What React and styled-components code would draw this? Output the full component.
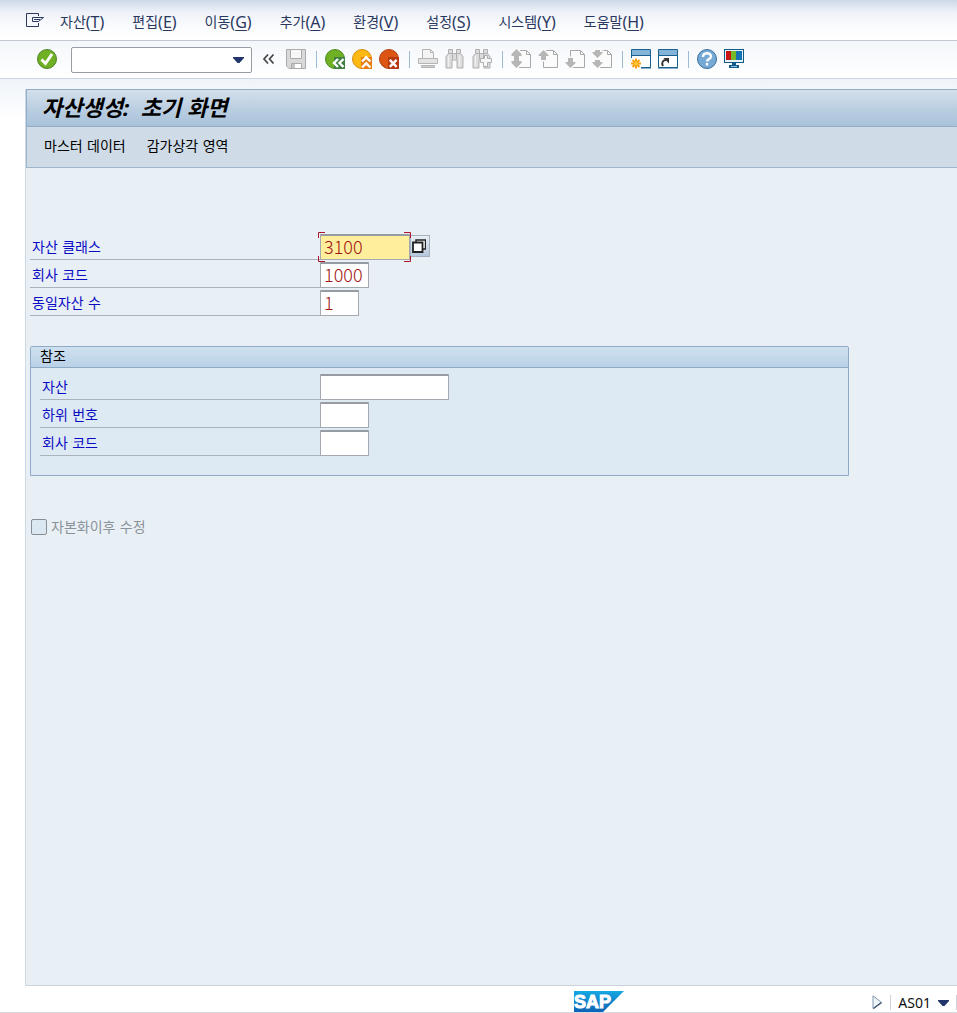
import { useState } from "react";
import styled, { createGlobalStyle } from "styled-components";

const menus = [
  ["자산", "T"],
  ["편집", "E"],
  ["이동", "G"],
  ["추가", "A"],
  ["환경", "V"],
  ["설정", "S"],
  ["시스템", "Y"],
  ["도움말", "H"],
];

export default function App() {
  const [command, setCommand] = useState("");
  const [assetClass, setAssetClass] = useState("3100");
  const [company, setCompany] = useState("1000");
  const [count, setCount] = useState("1");

  return (
    <Page>
      <GlobalStyle />
      <MenuBar aria-label="Menu">
        <MenuIconButton aria-label="Session menu">
          <SessionIcon />
        </MenuIconButton>
        {menus.map(([label, key]) => (
          <MenuItem key={key}>
            {label}
            <Shortcut>
              (<u>{key}</u>)
            </Shortcut>
          </MenuItem>
        ))}
      </MenuBar>

      <Toolbar>
        <IconButton aria-label="Enter">
          <EnterIcon />
        </IconButton>
        <CommandBox>
          <CommandInput
            aria-label="Command"
            value={command}
            onChange={(e) => setCommand(e.target.value)}
          />
          <CommandToggle aria-label="Command history">
            <DownArrow />
          </CommandToggle>
        </CommandBox>
        <IconButton aria-label="Collapse">
          <CollapseIcon />
        </IconButton>
        <IconButton aria-label="Save" disabled>
          <SaveIcon />
        </IconButton>
        <Separator />
        <IconButton aria-label="Back">
          <RoundIcon fill="#6fb024" edge="#4b8a1d" corner="#3f8040">
            <path d="M13 10l-4 4 4 4M18.5 10l-4 4 4 4" />
          </RoundIcon>
        </IconButton>
        <IconButton aria-label="Exit">
          <RoundIcon fill="#fdb913" edge="#d98c10" corner="#e87b12">
            <path d="M10 12.5l4.2-4.2 4.2 4.2M10 18.5l4.2-4.2 4.2 4.2" />
          </RoundIcon>
        </IconButton>
        <IconButton aria-label="Cancel">
          <RoundIcon fill="#dc5515" edge="#b3400f" corner="#b53a12">
            <path d="M10.8 10.8l6.8 7M17.6 10.8l-6.8 7" />
          </RoundIcon>
        </IconButton>
        <Separator />
        <IconButton aria-label="Print" disabled>
          <PrintIcon />
        </IconButton>
        <IconButton aria-label="Find" disabled>
          <FindIcon />
        </IconButton>
        <IconButton aria-label="Find next" disabled>
          <FindIcon next />
        </IconButton>
        <Separator />
        <IconButton aria-label="First page" disabled>
          <PageIcon arrows={["M5.5 0l5 5v2H8v3H3V7H.5V5z", "M3 10h5v2h2.5v2l-5 5-5-5v-2H3z"]} />
        </IconButton>
        <IconButton aria-label="Previous page" disabled>
          <PageIcon arrows={["M5.5 1l5 5v1H8v4H3V7H.5V6z"]} />
        </IconButton>
        <IconButton aria-label="Next page" disabled>
          <PageIcon arrows={["M3 9h5v4h2.5v1l-5 5-5-5v-1H3z"]} />
        </IconButton>
        <IconButton aria-label="Last page" disabled>
          <PageIcon arrows={["M3 1h5v2h2.5v1l-5 5-5-5V3H3z", "M3 11h5v2h2.5v1l-5 5-5-5v-1H3z"]} />
        </IconButton>
        <Separator />
        <IconButton aria-label="New session">
          <WindowIcon>
            <path d="M0 9h10v11H0z" fill="#fff" />
            <path
              d="M5 9.5v10M0 14.5h10M1.5 11l7 7M8.5 11l-7 7"
              stroke="#f5a010"
              strokeWidth="2"
            />
            <circle cx="5" cy="14.5" r="2" fill="#ffc629" />
          </WindowIcon>
        </IconButton>
        <IconButton aria-label="Create shortcut">
          <WindowIcon>
            <path d="M5 17c-2-3 0-6 3-6" stroke="#333" strokeWidth="2" fill="none" />
            <path d="M5.5 9H11v5.5z" fill="#333" />
          </WindowIcon>
        </IconButton>
        <Separator />
        <IconButton aria-label="Help">
          <HelpIcon />
        </IconButton>
        <IconButton aria-label="Customize layout">
          <MonitorIcon />
        </IconButton>
      </Toolbar>

      <Screen>
        <TitleBar>
          <Title>{"자산생성:  초기 화면"}</Title>
        </TitleBar>
        <AppToolbar>
          <AppButton>마스터 데이터</AppButton>
          <AppButton>감가상각 영역</AppButton>
        </AppToolbar>

        <Content>
          <Row>
            <Label htmlFor="asset-class">자산 클래스</Label>
            <FocusFrame>
              <Field
                id="asset-class"
                $width={90}
                $active
                value={assetClass}
                onChange={(e) => setAssetClass(e.target.value)}
              />
              <Corners />
            </FocusFrame>
            <SearchHelp aria-label="자산 클래스 검색">
              <CopyIcon />
            </SearchHelp>
          </Row>
          <Row>
            <Label htmlFor="company">회사 코드</Label>
            <Field
              id="company"
              $width={49}
              value={company}
              onChange={(e) => setCompany(e.target.value)}
            />
          </Row>
          <Row>
            <Label htmlFor="count">동일자산 수</Label>
            <Field
              id="count"
              $width={39}
              value={count}
              onChange={(e) => setCount(e.target.value)}
            />
          </Row>

          <Group aria-labelledby="ref-title">
            <GroupTitle id="ref-title">참조</GroupTitle>
            <GroupBody>
              <Row>
                <Label htmlFor="ref-asset" $inner>자산</Label>
                <Field id="ref-asset" $width={129} />
              </Row>
              <Row>
                <Label htmlFor="ref-sub" $inner>하위 번호</Label>
                <Field id="ref-sub" $width={49} />
              </Row>
              <Row>
                <Label htmlFor="ref-company" $inner>회사 코드</Label>
                <Field id="ref-company" $width={49} />
              </Row>
            </GroupBody>
          </Group>

          <CheckLabel>
            <Checkbox type="checkbox" disabled />
            자본화이후 수정
          </CheckLabel>
        </Content>
      </Screen>

      <StatusBar>
        <SapLogo />
        <StatusRight>
          <StatusButton aria-label="Expand status">
            <ExpandIcon />
          </StatusButton>
          <StatusLine />
          <StatusButton>
            AS01
            <DownArrow />
          </StatusButton>
          <StatusLine />
        </StatusRight>
      </StatusBar>
    </Page>
  );
}

/* ---------- icons ---------- */

function SessionIcon() {
  return (
    <svg width="19" height="15" viewBox="0 0 19 15" fill="none" stroke="#2c3a5e">
      <path d="M12.5 3V.5H.5v13h12V10" />
      <path d="M6.5 4.5h11l-5 4h-6v-4M8 6.5h6" />
    </svg>
  );
}

function DownArrow() {
  return (
    <svg width="11" height="6" viewBox="0 0 11 6">
      <path d="M0 0h11v1L6.5 6h-2L0 1z" fill="#22366b" />
    </svg>
  );
}

function EnterIcon() {
  return (
    <svg width="20" height="20" viewBox="0 0 20 20">
      <circle cx="10" cy="10" r="9.5" fill="#6fb024" stroke="#508528" />
      <path d="M4.5 10.5l4 4 6.5-9.5" fill="none" stroke="#fff" strokeWidth="3" />
    </svg>
  );
}

function CollapseIcon() {
  return (
    <svg width="20" height="20" viewBox="0 0 20 20" fill="none" stroke="#444" strokeWidth="1.7">
      <path d="M9 5.5L5 10l4 4.5M14.5 5.5l-4 4.5 4 4.5" />
    </svg>
  );
}

function SaveIcon() {
  return (
    <svg width="20" height="20" viewBox="0 0 20 20" fill="#d9d9d9" stroke="#aaa">
      <path d="M.5.5h19v19H3L.5 17z" />
      <path d="M4.5.5h11v9h-11z" fill="#f7f7f7" />
      <path d="M5.5 14.5h10v5h-10z" fill="#fff" />
      <path d="M6 15h3v4H6z" fill="#c4c4c4" stroke="none" />
    </svg>
  );
}

function RoundIcon({ fill, edge, corner, children }) {
  return (
    <svg width="20" height="20" viewBox="0 0 20 20">
      <circle cx="10" cy="10" r="9.5" fill={fill} stroke={edge} />
      <path d="M9 8h11v12H9z" fill={corner} />
      <g fill="none" stroke="#fff" strokeWidth="2.4">
        {children}
      </g>
    </svg>
  );
}

function PrintIcon() {
  return (
    <svg width="20" height="20" viewBox="0 0 20 20" fill="#f4f4f4" stroke="#b5b5b5">
      <path d="M4.5 9V.5h8l3 3V9" />
      <path d="M12.5.5v3h3" fill="none" />
      <path d="M.5 9.5h19v5H.5z" fill="#e4e4e4" />
      <path d="M3.5 16.5h13v2h-13z" fill="#ccc" />
    </svg>
  );
}

function FindIcon({ next }) {
  return (
    <svg width="20" height="20" viewBox="0 0 20 20" fill="#dcdcdc" stroke="#b0b0b0">
      <path d="M3.5.5h4v4h4v-4h4v4l2.5 3V19h-6v-8H7v8H1V7.5l2.5-3z" />
      <path d="M3.5 4.5h4v6M15.5 4.5h-4v6" fill="none" />
      <path d="M3.5 6.500v11M14.5 6.500v11" stroke="#f2f2f2" />
      {next && <path d="M12.5 6.5h3v3h4v4h-4v4h-4v-4h-3v-4h4z" fill="#f6f6f6" />}
    </svg>
  );
}

function PageIcon({ arrows }) {
  return (
    <svg width="20" height="20" viewBox="0 0 20 20" stroke="#a8a8a8">
      <path d="M5.5 1.5h10l4 4v13h-14z" fill="#fbfbfb" />
      <path d="M15.5 1.5v4h4" fill="none" />
      {arrows.map((d) => (
        <path key={"halo" + d} d={d} fill="#fbfbfb" stroke="#fbfbfb" strokeWidth="3" />
      ))}
      {arrows.map((d) => (
        <path key={d} d={d} fill="#b6b6b6" stroke="none" />
      ))}
    </svg>
  );
}

function WindowIcon({ children }) {
  return (
    <svg width="20" height="20" viewBox="0 0 20 20">
      <path d="M.5.5h19v18H.5z" fill="#fff" stroke="#17608f" />
      <path d="M1 1h18v5H1z" fill="#83b3d9" />
      <path d="M0 6.5h20M0 19h20" stroke="#17608f" />
      {children}
    </svg>
  );
}

function HelpIcon() {
  return (
    <svg width="20" height="20" viewBox="0 0 20 20">
      <circle cx="10" cy="10" r="9.5" fill="#75a9d6" stroke="#3c6f9e" />
      <path
        d="M6 8c0-5 8-5 8-.5 0 2.7-4 2.5-4 5M10 14v2.5"
        fill="none"
        stroke="#fff"
        strokeWidth="2.4"
      />
    </svg>
  );
}

function MonitorIcon() {
  return (
    <svg width="20" height="20" viewBox="0 0 20 20">
      <path d="M0 0h20v14H0z" fill="#0f5b8a" />
      <path d="M1 1h18v12H1z" fill="#e8f3f8" />
      <path d="M2 2h5v9H2z" fill="#c91414" />
      <path d="M7 2h5v9H7z" fill="#76b82a" />
      <path d="M12 2h6v9h-6z" fill="#1472b5" />
      <path d="M8 14h4v2h3v3H5v-3h3z" fill="#0f5b8a" />
      <path d="M7 17h6v1H7z" fill="#8fc4dd" />
    </svg>
  );
}

function CopyIcon() {
  return (
    <svg width="14" height="14" viewBox="0 0 14 14" fill="#fff" stroke="#222">
      <path d="M4 1h9.5v9H4z" strokeWidth="1.4" />
      <path d="M1 3.5h9.5V13H1z" strokeWidth="1.8" />
    </svg>
  );
}

function Corners() {
  return (
    <CornerSvg fill="none" stroke="#b3122b" viewBox="0 0 93 30">
      <path d="M.5 6V.5H7M86 .5h6.5V6M.5 24v5.5H7M86 29.5h6.5V24" />
    </CornerSvg>
  );
}

function ExpandIcon() {
  return (
    <svg width="11" height="15" viewBox="0 0 11 15">
      <path d="M1 .8v12.7l8.5-6z" fill="#eef3f8" stroke="#8197ae" />
      <path d="M1.5 13.5l8-6" stroke="#41576f" strokeWidth="1.5" />
    </svg>
  );
}

function SapLogo() {
  return (
    <svg width="50" height="21" viewBox="0 0 50 21" role="img" aria-label="SAP">
      <defs>
        <linearGradient id="sap" x1="0" y1="0" x2="0" y2="1">
          <stop offset="0" stopColor="#16a9e3" />
          <stop offset="1" stopColor="#0d62b5" />
        </linearGradient>
      </defs>
      <path d="M0 0h50L29 21H0z" fill="url(#sap)" />
      <text
        x="0"
        y="17"
        fill="#fff"
        stroke="#fff"
        strokeWidth="1"
        fontFamily="Liberation Sans, sans-serif"
        fontWeight="700"
        fontSize="18"
      >
        SAP
      </text>
    </svg>
  );
}

/* ---------- styles ---------- */

const GlobalStyle = createGlobalStyle`
  * {
    box-sizing: border-box;
  }

  body {
    margin: 0;
    background: #fff;
  }

  body, button, input {
    font-family: "DejaVu Sans", "Noto Sans CJK KR", sans-serif;
    font-size: 14px;
    line-height: 20px;
  }

  button {
    padding: 0;
    border: 0;
    background: none;
    color: inherit;
    cursor: pointer;
  }

  svg {
    display: block;
  }
`;

const Page = styled.div`
  display: flex;
  flex-direction: column;
  min-height: 100vh;
  background: linear-gradient(#f0f4fa 80px, #fff 120px);
`;

const MenuBar = styled.nav`
  display: flex;
  align-items: center;
  gap: 28px;
  height: 41px;
  padding: 4px 26px 0;
  border-bottom: 1px solid #c3c7cf;
  background: linear-gradient(#cdd8e8, #eef2f8 12px, #fbfcfe 28px, #fff);
  color: #2a3860;
`;

const MenuIconButton = styled.button`
  margin-right: -13px;
  padding-bottom: 4px;
`;

const MenuItem = styled.button`
  display: flex;
  align-items: center;
  white-space: nowrap;
`;

const Shortcut = styled.span`
  font-family: "Noto Sans", sans-serif;
  font-size: 16px;

  u {
    text-underline-offset: 2px;
  }
`;

const Toolbar = styled.div`
  display: flex;
  align-items: center;
  gap: 7px;
  height: 38px;
  padding: 0 37px 1px;
  border-bottom: 1px solid #cbd5e2;
  background: linear-gradient(#f4f7fb, #fff);
`;

const IconButton = styled.button`
  flex: none;
  width: 20px;
  height: 20px;

  &:disabled {
    cursor: default;
  }
`;

const Separator = styled.span`
  width: 1px;
  height: 17px;
  margin: 0 1px 0 3px;
  background: #9dbbd6;
`;

const CommandBox = styled.div`
  display: flex;
  width: 181px;
  height: 26px;
  margin: 2px 0 0 7px;
  border: 1px solid #999da3;
  border-radius: 2px;
  background: #fff;
`;

const CommandInput = styled.input`
  flex: 1;
  min-width: 0;
  padding: 0 4px;
  border: 0;
  outline: 0;
  background: none;
`;

const CommandToggle = styled.button`
  display: flex;
  align-items: center;
  justify-content: center;
  width: 25px;
`;

const Screen = styled.main`
  display: flex;
  flex: 1;
  flex-direction: column;
  margin: 10px 0 0 25px;
  border-left: 1px solid #ccd8e2;
  border-bottom: 1px solid #c9d3db;
  background: #e8f0f6;
`;

const TitleBar = styled.header`
  display: flex;
  align-items: center;
  height: 38px;
  padding: 0 15px 2px;
  border: 1px solid #95adc4;
  border-right: 0;
  background: linear-gradient(#d3e0ec, #bccfe1 50%, #a8c2db);
`;

const Title = styled.h1`
  margin: 0;
  font-family: "Noto Sans", "Noto Sans CJK KR", sans-serif;
  font-size: 22px;
  font-style: italic;
  font-weight: 700;
  line-height: 28px;
  white-space: pre;
`;

const AppToolbar = styled.div`
  display: flex;
  align-items: center;
  gap: 21px;
  height: 41px;
  padding: 0 17px 2px;
  border: 1px solid #9fb5c9;
  border-width: 0 0 1px 1px;
  background: #cfdce7;
`;

const AppButton = styled.button`
  white-space: nowrap;
`;

const Content = styled.div`
  padding: 64px 20px 40px 4px;
`;

const Row = styled.div`
  display: flex;
  align-items: center;
  height: 28px;
`;

const Label = styled.label`
  width: ${(props) => (props.$inner ? "280px" : "290px")};
  height: 28px;
  padding: 5px 2px 0;
  border-bottom: 1px solid #a9b3bb;
  color: #0a0ac4;
`;

const Field = styled.input`
  width: ${(props) => props.$width}px;
  height: 26px;
  margin-top: 2px;
  padding: 0 3px 4px;
  border: 1px solid #a3a9ae;
  border-top: 2px solid #969ca2;
  border-radius: 1px;
  outline: 0;
  background: ${(props) => (props.$active ? "#ffee9c" : "#fff")};
  color: #a01212;
  font-family: "Noto Sans CJK KR", sans-serif;
  font-size: 18px;
  font-weight: 300;
`;

const FocusFrame = styled.div`
  position: relative;
  display: flex;
`;

const CornerSvg = styled.svg`
  position: absolute;
  top: 0;
  left: -2px;
  width: 93px;
  height: 30px;
  pointer-events: none;
`;

const SearchHelp = styled.button`
  display: flex;
  align-items: center;
  justify-content: center;
  width: 20px;
  height: 22px;
  padding-right: 3px;
  border: 1px solid #a5b1bf;
  background: linear-gradient(#e9eff6, #b5c7dc);
`;

const Group = styled.section`
  max-width: 819px;
  margin-top: 30px;
  border: 1px solid #91aac9;
  border-radius: 2px 2px 0 0;
  background: #deeaf3;
`;

const GroupTitle = styled.h2`
  height: 21px;
  margin: 0;
  padding: 0 9px;
  border-bottom: 1px solid #8ea9c6;
  background: linear-gradient(#cfe1f0, #b9d1e6);
  font-size: 14px;
  font-weight: 400;
  line-height: 18px;
`;

const GroupBody = styled.div`
  padding: 4px 9px 19px;
`;

const CheckLabel = styled.label`
  display: flex;
  align-items: center;
  gap: 4px;
  width: max-content;
  margin: 41px 0 0 1px;
  color: #8a9299;
`;

const Checkbox = styled.input`
  width: 16px;
  height: 16px;
  margin: 0;
  border: 1px solid #858e97;
  border-radius: 2px;
  background: #dce8f1;
  appearance: none;
`;

const StatusBar = styled.footer`
  display: flex;
  align-items: center;
  justify-content: space-between;
  height: 27px;
  padding: 5px 0 0 60%;
  border-bottom: 1px solid #d5dade;
  background: #fff;
`;

const StatusRight = styled.div`
  display: flex;
  align-items: center;
  gap: 7px;
  padding-top: 2px;
`;

const StatusButton = styled.button`
  display: flex;
  align-items: center;
  gap: 7px;
  color: #111;
  font-family: "Noto Sans", sans-serif;
`;

const StatusLine = styled.span`
  width: 1px;
  height: 15px;
  background: #ccd3dc;
`;
